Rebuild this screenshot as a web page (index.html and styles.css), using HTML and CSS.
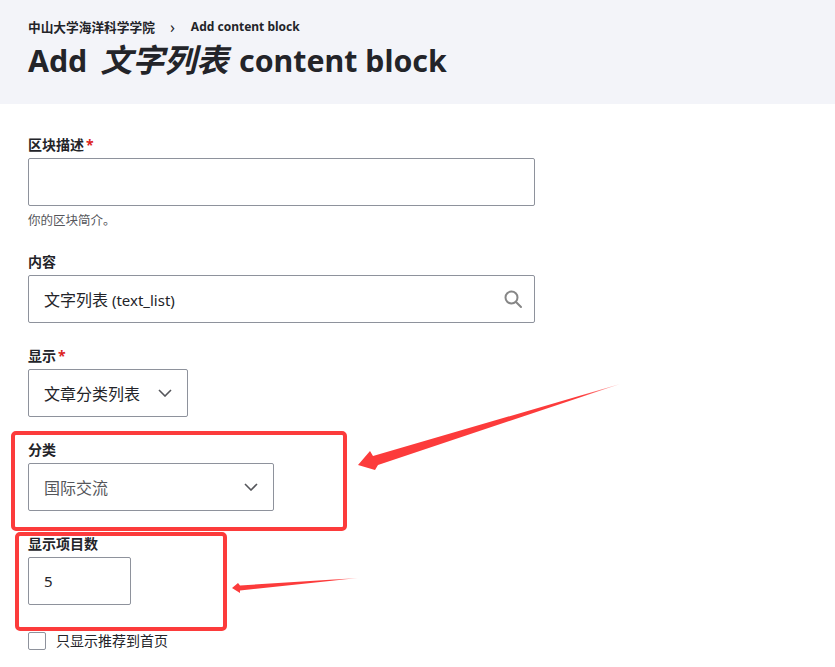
FILE: index.html
```html
<!DOCTYPE html>
<html lang="zh-CN">
<head>
    <meta charset="UTF-8">
    <meta name="viewport" content="width=device-width, initial-scale=1.0">
    <title>Add 文字列表 content block</title>
    <link rel="stylesheet" href="styles.css">
</head>
<body>
    <header class="page-header">
        <nav class="breadcrumb">
            <a href="#">中山大学海洋科学学院</a>
            <span class="breadcrumb-sep">›</span>
            <span class="breadcrumb-current">Add content block</span>
        </nav>
        <h1>Add <em>文字列表</em> content block</h1>
    </header>

    <form class="block-form">
        <div class="field">
            <label for="info">区块描述<span class="required">*</span></label>
            <input type="text" id="info" class="box box-wide">
            <p class="field-help">你的区块简介。</p>
        </div>

        <div class="field">
            <label>内容</label>
            <div class="box box-wide box-row">
                <span><span class="cjk">文字列表</span> (text_list)</span>
                <svg class="icon-search" width="20" height="20" viewBox="0 0 20 20" fill="none" stroke="#868686" stroke-width="2">
                    <circle cx="8.5" cy="8.5" r="6"/>
                    <path d="M13 13l5 5" stroke-linecap="round"/>
                </svg>
            </div>
        </div>

        <div class="field">
            <label>显示<span class="required">*</span></label>
            <div class="box box-display box-row">
                <span class="cjk">文章分类列表</span>
                <svg class="icon-chevron" width="14" height="8" viewBox="0 0 14 8" fill="none" stroke="#55565b" stroke-width="1.6">
                    <path d="M1 1l6 6 6-6"/>
                </svg>
            </div>
        </div>

        <div class="field">
            <label>分类</label>
            <div class="box box-category box-row">
                <span class="cjk muted">国际交流</span>
                <svg class="icon-chevron" width="14" height="8" viewBox="0 0 14 8" fill="none" stroke="#55565b" stroke-width="1.6">
                    <path d="M1 1l6 6 6-6"/>
                </svg>
            </div>
        </div>

        <div class="field">
            <label for="count">显示项目数</label>
            <input type="text" id="count" class="box box-count" value="5">
        </div>

        <div class="check-row">
            <span class="checkbox"></span>
            <span>只显示推荐到首页</span>
        </div>
    </form>

    <!-- red annotations drawn on top of the screenshot -->
    <svg class="annotations" width="835" height="667" viewBox="0 0 835 667">
        <defs>
            <linearGradient id="fadeBig" gradientUnits="userSpaceOnUse" x1="358" y1="465" x2="620" y2="384">
                <stop offset="0.85" stop-color="#fc3b3b"/>
                <stop offset="1" stop-color="#fc3b3b" stop-opacity="0.4"/>
            </linearGradient>
            <linearGradient id="fadeSmall" gradientUnits="userSpaceOnUse" x1="232" y1="588" x2="358" y2="578">
                <stop offset="0.8" stop-color="#fc3b3b"/>
                <stop offset="1" stop-color="#fc3b3b" stop-opacity="0.4"/>
            </linearGradient>
        </defs>
        <rect x="13" y="433" width="332" height="96" rx="3" fill="none" stroke="#fc3b3b" stroke-width="4"/>
        <rect x="17" y="534" width="208" height="95" rx="3" fill="none" stroke="#fc3b3b" stroke-width="4"/>
        <path d="M358 465L370 451L373 456L620 384L378 465L375 470Z" fill="url(#fadeBig)"/>
        <path d="M232 588L238 583L240 585.5L358 578L240 590.5L240 593Z" fill="url(#fadeSmall)"/>
    </svg>
</body>
</html>
```

FILE: styles.css
```css
html, body { height: 667px; overflow: hidden; }
body {
    margin: 0;
    position: relative;
    background-color: #fff;
    color: #232429;
    font-family: "Noto Sans", "Noto Sans CJK SC", sans-serif;
    font-size: 14px;
}

.page-header { height: 104px; box-sizing: border-box; padding: 18px 28px 0; background-color: #f3f4f9; }
.breadcrumb { display: flex; align-items: center; height: 18px; font-size: 12.7px; font-weight: 700; line-height: 18px; }
.breadcrumb a { color: #232429; text-decoration: none; }
.breadcrumb-sep { margin: 0 16px 0 15px; font-size: 16px; font-weight: 400; }
.breadcrumb-current { font-size: 12px; }
h1 { margin: 4px 0 0; font-size: 30.3px; line-height: 40px; font-weight: 700; }
h1 em { margin: 0 3px 0 5px; font-size: 32px; font-style: italic; }

.block-form { padding: 32px 28px 0; }
.field { margin-bottom: 24px; }
label { display: block; margin-bottom: 4px; font-size: 14px; font-weight: 700; line-height: 18px; }
.required { margin-left: 2px; color: #dc2323; }
.field-help { margin: 6px 0 0; color: #55565b; font-size: 12.5px; line-height: 17px; }

.box {
    display: block;
    height: 48px;
    box-sizing: border-box;
    padding: 0 15px;
    border: 1px solid #8e929c;
    border-radius: 2px;
    background-color: #fff;
    color: #232429;
    font-family: inherit;
    font-size: 15px;
}
.box-row { display: flex; align-items: center; justify-content: space-between; }
.box-wide { width: 507px; }
.box-display { width: 160px; }
.box-category { width: 246px; }
.box-count { width: 103px; }
.cjk { font-size: 16px; }
.muted { color: #55565b; }

.icon-search { margin-right: -4px; }
.icon-chevron { flex-shrink: 0; }

.check-row { display: flex; align-items: center; gap: 10px; padding-top: 3px; font-size: 14px; line-height: 18px; color: #232429; }
.checkbox { width: 18px; height: 18px; box-sizing: border-box; border: 1px solid #8e929c; border-radius: 2px; }

.annotations { position: absolute; left: 0; top: 0; pointer-events: none; }
```
